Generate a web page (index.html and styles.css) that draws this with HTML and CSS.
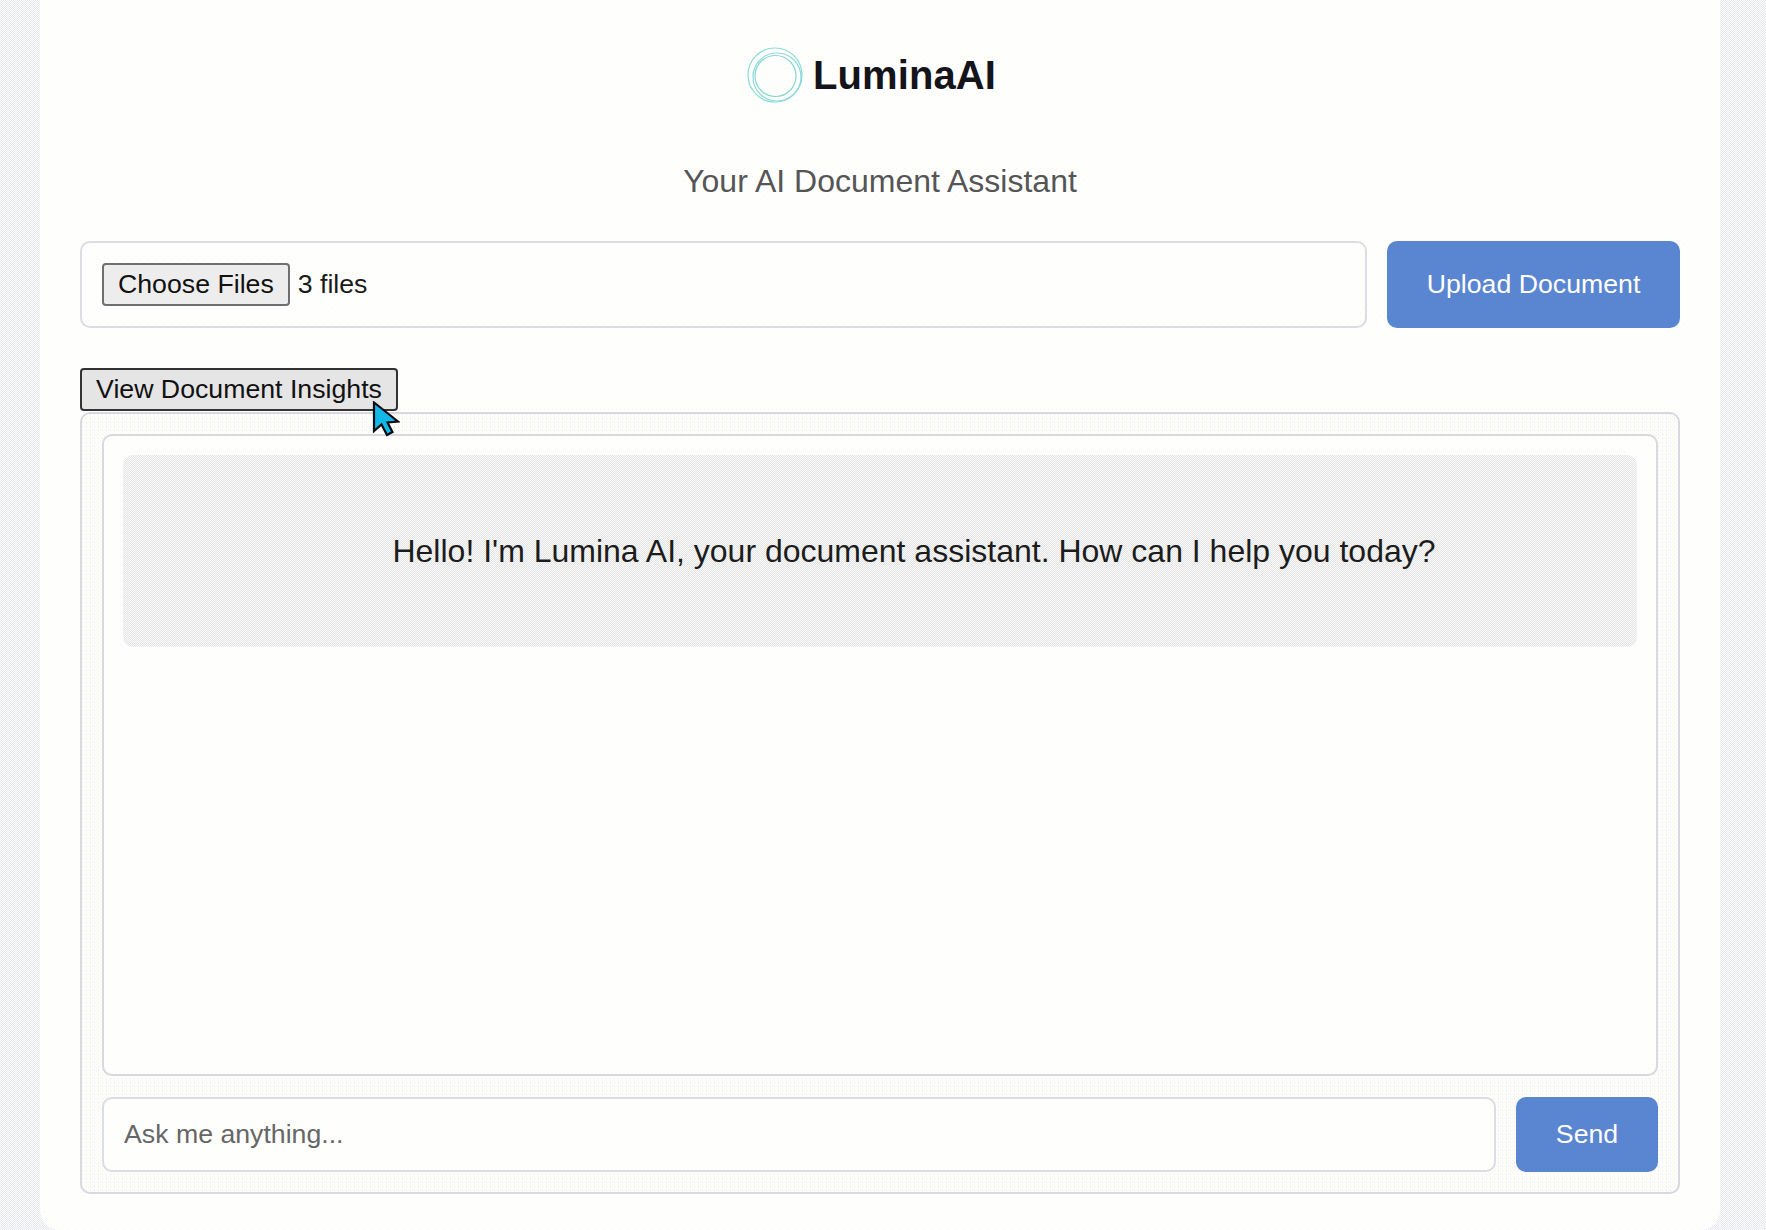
FILE: index.html
```html
<!DOCTYPE html>
<html lang="en">
<head>
  <meta charset="UTF-8" />
  <title>LuminaAI</title>
  <link rel="stylesheet" href="styles.css">
</head>
<body>
  <div class="container">
    <div class="logo">
      <svg class="logo-mark" width="56" height="56" viewBox="0 0 56 56" fill="none" stroke-width="1.2">
        <circle cx="28" cy="28" r="27" stroke="#8adcd0" />
        <circle cx="30" cy="30" r="24" stroke="#8fd8e4" />
        <circle cx="28.5" cy="29" r="20.5" stroke="#86d8c8" />
      </svg>
      <span class="logo-name">LuminaAI</span>
    </div>
    <p class="tagline">Your AI Document Assistant</p>

    <div class="upload-row">
      <div class="file-box">
        <button class="native-btn">Choose Files</button>
        <span class="file-count">3 files</span>
      </div>
      <button class="primary-btn upload-btn">Upload Document</button>
    </div>

    <button class="native-btn insights-btn">View Document Insights</button>

    <div class="chat">
      <div class="messages">
        <div class="bubble">Hello! I'm Lumina AI, your document assistant. How can I help you today?</div>
      </div>
      <div class="ask-row">
        <input class="ask-input" type="text" placeholder="Ask me anything..." />
        <button class="primary-btn send-btn">Send</button>
      </div>
    </div>
  </div>

  <!-- Cursor from the recording -->
  <svg class="cursor" width="28" height="36" viewBox="0 0 28 36">
    <path d="M2 1.5 L2 30 L9.5 23.5 L15 34 L20.5 31 L15.5 21.5 L26 20.5 Z" fill="#12b8e8" stroke="#0c0c14" stroke-width="2.2" stroke-linejoin="miter" />
  </svg>
</body>
</html>
```

FILE: styles.css
```css
* {
  box-sizing: border-box;
}

html, body {
  margin: 0;
  padding: 0;
  height: 100%;
  overflow: hidden;
}

body {
  font-family: 'Liberation Sans', Arial, sans-serif;
  color: #1a1a1a;
  background-color: #f3f3f7;
  background-image: repeating-conic-gradient(#e6e7f0 0 25%, #fdfdfb 0 50%);
  background-size: 2px 2px;
  position: relative;
}

/* sparse yellow speckle, same on the card and the white boxes */
.container,
.messages {
  background-color: #fefefe;
  background-image:
    conic-gradient(at 1px 1px, transparent 75%, #fffad0 0),
    conic-gradient(at 1px 1px, transparent 75%, #fffad0 0);
  background-size: 8px 8px;
  background-position: 0 0, 4px 4px;
}

.container {
  width: 1680px;
  height: 1230px;
  margin-left: 40px;
  padding: 0 40px;
  border-radius: 0 0 20px 20px;
}

.logo {
  height: 163px;
  padding-left: 667px;
  padding-top: 47px;
  display: flex;
  align-items: flex-start;
  gap: 10px;
}

.logo-mark {
  flex: none;
}

.logo-name {
  font-size: 40px;
  line-height: 56px;
  font-weight: 700;
  color: #14141a;
  letter-spacing: 0.1px;
}

.tagline {
  margin: 0;
  height: 38px;
  line-height: 36px;
  font-size: 32px;
  text-align: center;
  color: #555;
}

.upload-row {
  display: flex;
  gap: 20px;
  height: 87px;
  margin-top: 40px;
}

.file-box {
  flex: 1;
  display: flex;
  align-items: center;
  gap: 8px;
  padding: 0 20px;
  border: 2px solid #dcdce4;
  border-radius: 10px;
  font-size: 26.7px;
}

.file-count {
  font-size: 26.7px;
}

.native-btn {
  font-family: inherit;
  font-size: 26.7px;
  color: #111;
  height: 43px;
  padding: 0 14px;
  background: #ededed;
  border: 2px solid #6f6f6f;
  border-radius: 4px;
}

.primary-btn {
  font-family: inherit;
  font-size: 26.7px;
  color: #fff;
  background: #5a85d0;
  border: none;
  border-radius: 10px;
}

.upload-btn {
  width: 293px;
}

.insights-btn {
  display: block;
  width: 318px;
  margin-top: 40px;
  padding: 0;
  background: #e5e5e5;
  border-color: #333;
}

.chat {
  height: 782px;
  margin-top: 1px;
  padding: 20px;
  display: flex;
  flex-direction: column;
  gap: 21px;
  background-color: #fdfdfd;
  background-image:
    conic-gradient(at 1px 1px, transparent 75%, #e8e8f2 0),
    conic-gradient(at 1px 1px, transparent 75%, #fffad0 0);
  background-size: 4px 4px;
  background-position: 0 0, 2px 2px;
  border: 2px solid #d8d8de;
  border-radius: 10px;
}

.messages {
  flex: 1;
  padding: 19px;
  border: 2px solid #d8d8de;
  border-radius: 10px;
}

.bubble {
  height: 192px;
  padding-left: 68px;
  display: flex;
  align-items: center;
  justify-content: center;
  font-size: 32px;
  color: #1c1c1c;
  background-color: #f0f0f0;
  background-image: repeating-conic-gradient(#e4e4e8 0 25%, #fafaf6 0 50%);
  background-size: 2px 2px;
  border-radius: 10px;
}

.ask-row {
  display: flex;
  gap: 20px;
  height: 75px;
}

.ask-input {
  flex: 1;
  padding: 0 20px;
  font-family: inherit;
  font-size: 26.7px;
  background: #fefefd;
  border: 2px solid #dcdce4;
  border-radius: 10px;
}

.ask-input::placeholder {
  color: #666;
  opacity: 1;
}

.send-btn {
  width: 142px;
}

.cursor {
  position: absolute;
  left: 372px;
  top: 401px;
}
```
